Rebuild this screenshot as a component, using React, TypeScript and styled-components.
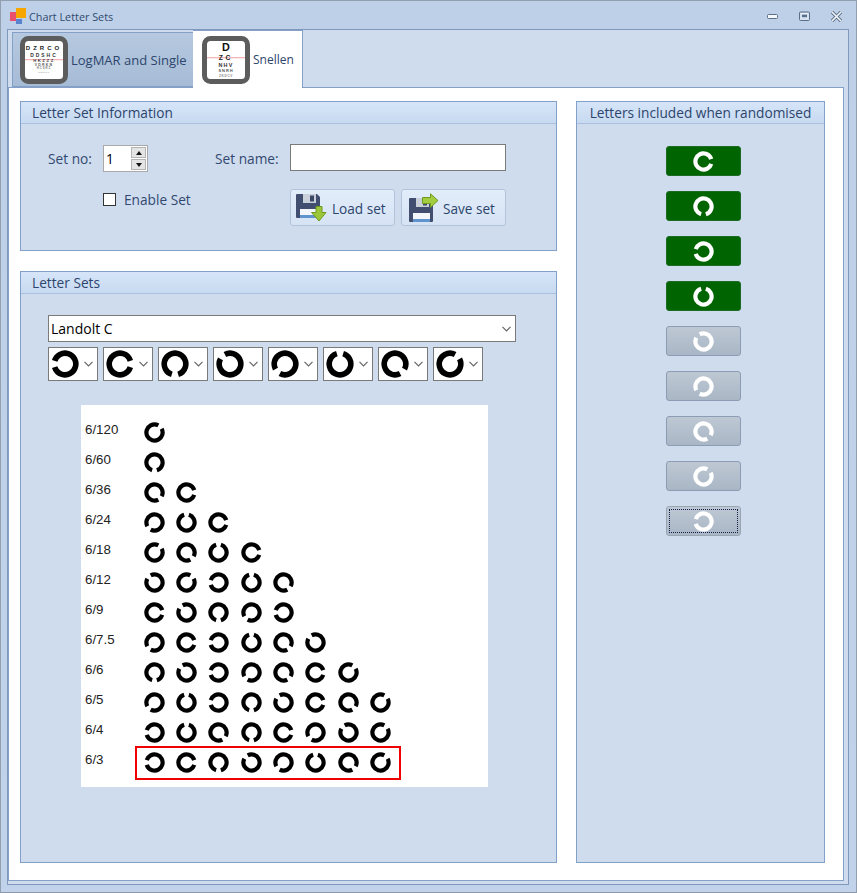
import React from 'react'
import styled, { createGlobalStyle } from 'styled-components'

type Dir = 'E' | 'NE' | 'N' | 'NW' | 'W' | 'SW' | 'S' | 'SE'

const ANGLES: Record<Dir, number> = { E: 0, NE: -45, N: -90, NW: -135, W: 180, SW: 135, S: 90, SE: 45 }

const CHART: { label: string; letters: Dir[] }[] = [
  { label: '6/120', letters: ['NE'] },
  { label: '6/60', letters: ['S'] },
  { label: '6/36', letters: ['SE', 'E'] },
  { label: '6/24', letters: ['SW', 'N', 'E'] },
  { label: '6/18', letters: ['NE', 'SE', 'N', 'E'] },
  { label: '6/12', letters: ['NW', 'NE', 'W', 'N', 'SE'] },
  { label: '6/9', letters: ['E', 'NW', 'S', 'SW', 'W'] },
  { label: '6/7.5', letters: ['SW', 'E', 'W', 'N', 'SE', 'NW'] },
  { label: '6/6', letters: ['S', 'NW', 'W', 'SW', 'SE', 'E', 'NE'] },
  { label: '6/5', letters: ['SW', 'N', 'W', 'S', 'NW', 'E', 'SE', 'NE'] },
  { label: '6/4', letters: ['W', 'N', 'SE', 'S', 'E', 'SW', 'NW', 'NE'] },
  { label: '6/3', letters: ['W', 'E', 'S', 'NW', 'SW', 'N', 'SE', 'NE'] },
]

const COMBOS: Dir[] = ['W', 'E', 'S', 'NW', 'SW', 'N', 'SE', 'NE']
const INCLUDED: Dir[] = ['E', 'S', 'W', 'N']
const EXCLUDED: Dir[] = ['NW', 'SW', 'SE', 'NE', 'W']

const LOGMAR_ROWS = [
  { text: 'DZRCO', y: 14, size: 6, spacing: 3, fill: '#222' },
  { text: 'DDSHC', y: 20.7, size: 4.9, spacing: 2, fill: '#333' },
  { text: 'HKZZZ', y: 25.7, size: 4.2, spacing: 1.6, fill: '#444' },
  { text: 'VDRKN', y: 29.7, size: 3.5, spacing: 1.2, fill: '#555' },
  { text: 'HCSRZ', y: 33.2, size: 2.9, spacing: 0.9, fill: '#777' },
  { text: 'ODKHV', y: 36.8, size: 2.4, spacing: 0.6, fill: '#999' },
]

const SNELLEN_ROWS = [
  { text: 'D', y: 15.2, size: 10.8, spacing: 0, fill: '#111' },
  { text: 'ZC', y: 24.4, size: 6.8, spacing: 2.6, fill: '#222' },
  { text: 'NHV', y: 31, size: 5.4, spacing: 1.2, fill: '#333' },
  { text: 'SNRH', y: 36, size: 4, spacing: 0.9, fill: '#555' },
  { text: 'ZKDCV', y: 40.6, size: 3.1, spacing: 0.7, fill: '#888' },
]

const GlobalStyle = createGlobalStyle`
  html, body {
    margin: 0;
    padding: 0;
  }
  body {
    font-family: 'Open Sans', 'Noto Sans', sans-serif;
  }
  *, *::before, *::after {
    box-sizing: border-box;
  }
`

const Window = styled.div`
  width: 857px;
  height: 893px;
  display: flex;
  flex-direction: column;
  background: linear-gradient(180deg, #bed0e7 0%, #c0d3ea 100%);
  border: 1px solid #929fae;
  border-bottom-color: #8d99a8;
  padding: 0 7px 7px 6px;
`

const TitleBar = styled.div`
  height: 28px;
  flex: none;
  display: flex;
  align-items: center;
  padding: 2px 0 0 3px;
`

const TitleText = styled.span`
  font-size: 10.8px;
  color: #2f4a70;
  margin-left: 2px;
`

const WindowButtons = styled.div`
  margin-left: auto;
  display: flex;
  align-items: center;
  gap: 19px;
  padding-right: 6px;
`

const TabControl = styled.div`
  flex: 1;
  min-height: 0;
  display: flex;
  flex-direction: column;
  border: 1px solid #7f98bc;
  background: #cfdcee;
  padding-right: 4px;
  padding-bottom: 3px;
`

const TabStrip = styled.div`
  height: 57px;
  flex: none;
  display: flex;
  align-items: flex-end;
  padding-left: 4px;
  position: relative;
  z-index: 1;
`

const Tab = styled.div<{ $active?: boolean }>`
  display: flex;
  align-items: center;
  gap: 3px;
  height: ${({ $active }) => ($active ? '58px' : '55px')};
  margin-bottom: ${({ $active }) => ($active ? '-1px' : '0')};
  width: ${({ $active }) => ($active ? '110px' : '181px')};
  padding-left: ${({ $active }) => ($active ? '9px' : '7px')};
  background: ${({ $active }) => ($active ? '#fff' : 'linear-gradient(180deg, #b6c9e0 0%, #a6bbd6 100%)')};
  border: 1px solid #84a0c6;
  border-bottom: ${({ $active }) => ($active ? 'none' : '1px solid #84a0c6')};
  border-right: ${({ $active }) => ($active ? '1px solid #84a0c6' : 'none')};
  border-left: ${({ $active }) => ($active ? 'none' : '1px solid #84a0c6')};
  font-size: ${({ $active }) => ($active ? '12px' : '13px')};
  color: #2c456c;
`

const TabPage = styled.div`
  flex: 1;
  min-height: 0;
  display: flex;
  gap: 19px;
  background: #fff;
  border: 1px solid #84a0c6;
  padding: 13px 18px 17px 11px;
`

const LeftColumn = styled.div`
  width: 537px;
  flex: none;
  display: flex;
  flex-direction: column;
  gap: 20px;
`

const Panel = styled.section<{ $grow?: boolean }>`
  display: flex;
  flex-direction: column;
  flex: ${({ $grow }) => ($grow ? '1' : 'none')};
  min-height: 0;
  background: #cfdcee;
  border: 1px solid #82a0c8;
`

const PanelHeader = styled.header<{ $center?: boolean }>`
  height: 22px;
  flex: none;
  display: flex;
  align-items: center;
  justify-content: ${({ $center }) => ($center ? 'center' : 'flex-start')};
  padding-left: ${({ $center }) => ($center ? '0' : '11px')};
  background: linear-gradient(180deg, #d6e5f8 0%, #c8daf1 100%);
  border-bottom: 1px solid #a9c0de;
  font-size: 13.7px;
  color: #2c456c;
`

const SetForm = styled.div`
  display: grid;
  grid-template-columns: 55px 45px 67px 75px 216px;
  grid-template-rows: 28px 37px;
  row-gap: 17px;
  padding: 20px 0 0 27px;
  height: 126px;
`

const FieldLabel = styled.label<{ $col: number }>`
  grid-column: ${({ $col }) => $col};
  align-self: center;
  font-size: 13.7px;
  color: #32496f;
  white-space: nowrap;
`

const Spinner = styled.div`
  grid-column: 2;
  height: 27px;
  margin-top: 1px;
  display: flex;
  justify-content: space-between;
  padding: 1px;
  background: #fff;
  border: 1px solid #a9a9a9;
  font-size: 13.7px;
  color: #000;
`

const SpinnerValue = styled.span`
  padding: 2px 0 0 1px;
`

const SpinnerButtons = styled.div`
  width: 15px;
  display: flex;
  flex-direction: column;
  gap: 1px;
`

const SpinnerButton = styled.div<{ $down?: boolean }>`
  flex: 1;
  display: flex;
  align-items: center;
  justify-content: center;
  background: #e4e4e4;
  border: 1px solid #b4b4b4;

  &::before {
    content: '';
    border-left: 3.5px solid transparent;
    border-right: 3.5px solid transparent;
    border-bottom: ${({ $down }) => ($down ? '0' : '4px solid #111')};
    border-top: ${({ $down }) => ($down ? '4px solid #111' : '0')};
  }
`

const NameInput = styled.input`
  grid-column: 5;
  height: 27px;
  width: 216px;
  padding: 0 4px;
  background: #fff;
  border: 1px solid #7a7a7a;
  outline: none;
`

const EnableRow = styled.div`
  grid-column: 2 / 5;
  display: flex;
  align-items: center;
  gap: 8px;
  height: 13px;
  margin-top: 4px;
  font-size: 13.7px;
  color: #32496f;
`

const Checkbox = styled.span`
  width: 13px;
  height: 13px;
  flex: none;
  background: #fff;
  border: 1px solid #333;
`

const SetButtons = styled.div`
  grid-column: 5;
  display: flex;
  gap: 6px;
`

const SetButton = styled.button`
  width: 105px;
  height: 37px;
  display: flex;
  align-items: center;
  gap: 5px;
  padding: 1px 0 0 4px;
  font-family: inherit;
  font-size: 13.6px;
  color: #2c456c;
  background: linear-gradient(180deg, #e2edfa 0%, #d6e3f4 100%);
  border: 1px solid #b2c4dc;
  border-radius: 3px;
  white-space: nowrap;
`

const SetsBody = styled.div`
  flex: 1;
  display: flex;
  flex-direction: column;
  padding: 21px 0 0 27px;
`

const LargeCombo = styled.div`
  width: 468px;
  height: 27px;
  flex: none;
  display: flex;
  align-items: center;
  justify-content: space-between;
  padding: 0 4px 0 2px;
  background: #fff;
  border: 1px solid #7a7a7a;
  font-size: 14px;
  color: #000;
`

const ComboRow = styled.div`
  display: flex;
  gap: 5px;
  margin-top: 5px;
`

const SmallCombo = styled.div`
  width: 50px;
  height: 34px;
  display: flex;
  align-items: center;
  justify-content: space-between;
  padding: 0 4px 0 2px;
  background: #fff;
  border: 1px solid #7a7a7a;
`

const Chart = styled.div`
  width: 407px;
  height: 382px;
  margin: 24px 0 0 33px;
  padding: 13px 0 0 4px;
  background: #fff;
`

const ChartRow = styled.div`
  height: 30px;
  display: flex;
  align-items: center;
`

const ChartLabel = styled.span`
  width: 58.5px;
  flex: none;
  padding-bottom: 8px;
  font-family: 'Liberation Sans', Arial, sans-serif;
  font-size: 13.3px;
  color: #222;
`

const ChartLetters = styled.div<{ $selected?: boolean }>`
  display: flex;
  position: relative;

  &::after {
    content: '';
    display: ${({ $selected }) => ($selected ? 'block' : 'none')};
    position: absolute;
    left: -9px;
    top: -6px;
    width: 266px;
    height: 34px;
    border: 2px solid #f00000;
  }
`

const ChartCell = styled.div`
  width: 32.4px;
  height: 22px;
  flex: none;
`

const LettersBody = styled.div`
  flex: 1;
  display: flex;
  flex-direction: column;
  gap: 15px;
  padding: 22px 0 0 89px;
`

const LetterButton = styled.button<{ $on?: boolean; $focused?: boolean }>`
  width: 75px;
  height: 30px;
  flex: none;
  display: flex;
  align-items: center;
  justify-content: center;
  position: relative;
  padding: 0;
  border-radius: 3px;
  border: 1px solid ${({ $on, $focused }) => ($on ? '#1c6b23' : $focused ? '#9aa5b4' : '#8c9cb4')};
  background: ${({ $on }) => ($on ? '#006400' : 'linear-gradient(180deg, #bdc8d3 0%, #a9b6c5 100%)')};

  &::after {
    content: '';
    display: ${({ $focused }) => ($focused ? 'block' : 'none')};
    position: absolute;
    inset: 2px;
    border: 1px dotted #10204a;
  }
`

function LandoltC({ dir, size = 21, color = '#000' }: { dir: Dir; size?: number; color?: string }) {
  return (
    <svg width={size} height={size} viewBox="0 0 21 21" style={{ display: 'block', flex: 'none' }}>
      <circle
        cx="10.5"
        cy="10.5"
        r="8.1"
        fill="none"
        stroke={color}
        strokeWidth="4.2"
        pathLength={360}
        strokeDasharray="326 34"
        transform={`rotate(${ANGLES[dir] + 17} 10.5 10.5)`}
      />
    </svg>
  )
}

function Chevron() {
  return (
    <svg width="9" height="6" viewBox="0 0 9 6" style={{ flex: 'none' }}>
      <path d="M0.5 0.8 L4.5 4.8 L8.5 0.8" fill="none" stroke="#666" strokeWidth="1.2" />
    </svg>
  )
}

function AppIcon() {
  return (
    <svg width="17" height="17" viewBox="0 0 17 17" style={{ flex: 'none' }}>
      <rect x="0" y="4" width="6" height="9" fill="#ea4f6b" />
      <rect x="6" y="0" width="10" height="10" fill="#f7a600" />
      <rect x="6" y="11" width="6" height="5" fill="#5a83cf" />
    </svg>
  )
}

function MinimiseIcon() {
  return (
    <svg width="13" height="8" viewBox="0 0 13 8">
      <rect x="1.5" y="2.5" width="10" height="4" rx="1" fill="#f4f7fb" stroke="#5d7089" />
    </svg>
  )
}

function MaximiseIcon() {
  return (
    <svg width="13" height="11" viewBox="0 0 13 11">
      <rect x="1.5" y="1" width="10" height="8.5" rx="1" fill="none" stroke="#5d7089" />
      <rect x="3" y="2.5" width="7" height="5.5" fill="none" stroke="#eef3f9" />
      <rect x="4" y="3.8" width="5" height="2.2" fill="#5d7089" />
    </svg>
  )
}

function CloseIcon() {
  return (
    <svg width="13" height="11" viewBox="0 0 13 11">
      <path d="M2 1 L11 10 M11 1 L2 10" stroke="#5d7089" strokeWidth="3.4" />
      <path d="M2 1 L11 10 M11 1 L2 10" stroke="#f2f6fb" strokeWidth="1.6" />
    </svg>
  )
}

function ChartIcon({ rows, lineY }: { rows: typeof LOGMAR_ROWS; lineY: number }) {
  return (
    <svg width="48" height="48" viewBox="0 0 48 48" style={{ flex: 'none' }}>
      <rect x="2.5" y="2.5" width="43" height="43" rx="6" fill="#fff" stroke="#5c5c5c" strokeWidth="5" />
      <rect x="5" y={lineY} width="38" height="1.3" fill="#f5b5b5" />
      {rows.map(r => (
        <text
          key={r.text}
          x="24"
          y={r.y}
          textAnchor="middle"
          fontFamily="'Liberation Sans', sans-serif"
          fontWeight="700"
          fontSize={r.size}
          letterSpacing={r.spacing}
          fill={r.fill}
        >
          {r.text}
        </text>
      ))}
    </svg>
  )
}

function Floppy({ x, y }: { x: number; y: number }) {
  return (
    <g transform={`translate(${x} ${y})`}>
      <path d="M1 0 H21 L24 3 V23 Q24 24 23 24 H1 Q0 24 0 23 V1 Q0 0 1 0 Z" fill="#414e70" />
      <rect x="7" y="0" width="13" height="9" fill="#c9d0da" />
      <rect x="14" y="1.5" width="4" height="6" fill="#3b4866" />
      <rect x="4" y="15" width="17" height="9" fill="#f3f6fa" />
      <rect x="4" y="21" width="17" height="3" fill="#5f94cf" />
    </g>
  )
}

function LoadIcon() {
  return (
    <svg width="32" height="30" viewBox="0 0 32 30" style={{ flex: 'none' }}>
      <Floppy x={1} y={1} />
      <path d="M21 13.5 H27 V19.5 H31 L24 28 L16.5 19.5 H21 Z" fill="#9cc63a" stroke="#6f9a22" strokeWidth="1" />
    </svg>
  )
}

function SaveIcon() {
  return (
    <svg width="32" height="30" viewBox="0 0 32 30" style={{ flex: 'none' }}>
      <Floppy x={3} y={5} />
      <path d="M16.5 4.5 H24.5 V0.8 L32 7.5 L24.5 14.5 V10.5 H16.5 Z" fill="#a3cc3f" stroke="#6f9a22" strokeWidth="1" />
    </svg>
  )
}

export default function App() {
  return (
    <>
      <GlobalStyle />
      <Window>
        <TitleBar>
          <AppIcon />
          <TitleText>Chart Letter Sets</TitleText>
          <WindowButtons>
            <MinimiseIcon />
            <MaximiseIcon />
            <CloseIcon />
          </WindowButtons>
        </TitleBar>
        <TabControl>
          <TabStrip>
            <Tab>
              <ChartIcon rows={LOGMAR_ROWS} lineY={23} />
              <span>LogMAR and Single</span>
            </Tab>
            <Tab $active>
              <ChartIcon rows={SNELLEN_ROWS} lineY={21} />
              <span>Snellen</span>
            </Tab>
          </TabStrip>
          <TabPage>
            <LeftColumn>
              <Panel>
                <PanelHeader>Letter Set Information</PanelHeader>
                <SetForm>
                  <FieldLabel $col={1}>Set no:</FieldLabel>
                  <Spinner>
                    <SpinnerValue>1</SpinnerValue>
                    <SpinnerButtons>
                      <SpinnerButton />
                      <SpinnerButton $down />
                    </SpinnerButtons>
                  </Spinner>
                  <FieldLabel $col={4}>Set name:</FieldLabel>
                  <NameInput readOnly />
                  <EnableRow>
                    <Checkbox />
                    <span>Enable Set</span>
                  </EnableRow>
                  <SetButtons>
                    <SetButton>
                      <LoadIcon />
                      Load set
                    </SetButton>
                    <SetButton>
                      <SaveIcon />
                      Save set
                    </SetButton>
                  </SetButtons>
                </SetForm>
              </Panel>
              <Panel $grow>
                <PanelHeader>Letter Sets</PanelHeader>
                <SetsBody>
                  <LargeCombo>
                    <span>Landolt C</span>
                    <Chevron />
                  </LargeCombo>
                  <ComboRow>
                    {COMBOS.map(dir => (
                      <SmallCombo key={dir}>
                        <LandoltC dir={dir} size={28} />
                        <Chevron />
                      </SmallCombo>
                    ))}
                  </ComboRow>
                  <Chart>
                    {CHART.map((row, i) => (
                      <ChartRow key={row.label}>
                        <ChartLabel>{row.label}</ChartLabel>
                        <ChartLetters $selected={i === CHART.length - 1}>
                          {row.letters.map((dir, j) => (
                            <ChartCell key={j}>
                              <LandoltC dir={dir} />
                            </ChartCell>
                          ))}
                        </ChartLetters>
                      </ChartRow>
                    ))}
                  </Chart>
                </SetsBody>
              </Panel>
            </LeftColumn>
            <Panel $grow>
              <PanelHeader $center>Letters included when randomised</PanelHeader>
              <LettersBody>
                {INCLUDED.map(dir => (
                  <LetterButton key={dir} $on>
                    <LandoltC dir={dir} color="#fff" />
                  </LetterButton>
                ))}
                {EXCLUDED.map((dir, i) => (
                  <LetterButton key={dir} $focused={i === EXCLUDED.length - 1}>
                    <LandoltC dir={dir} color="#fff" />
                  </LetterButton>
                ))}
              </LettersBody>
            </Panel>
          </TabPage>
        </TabControl>
      </Window>
    </>
  )
}
